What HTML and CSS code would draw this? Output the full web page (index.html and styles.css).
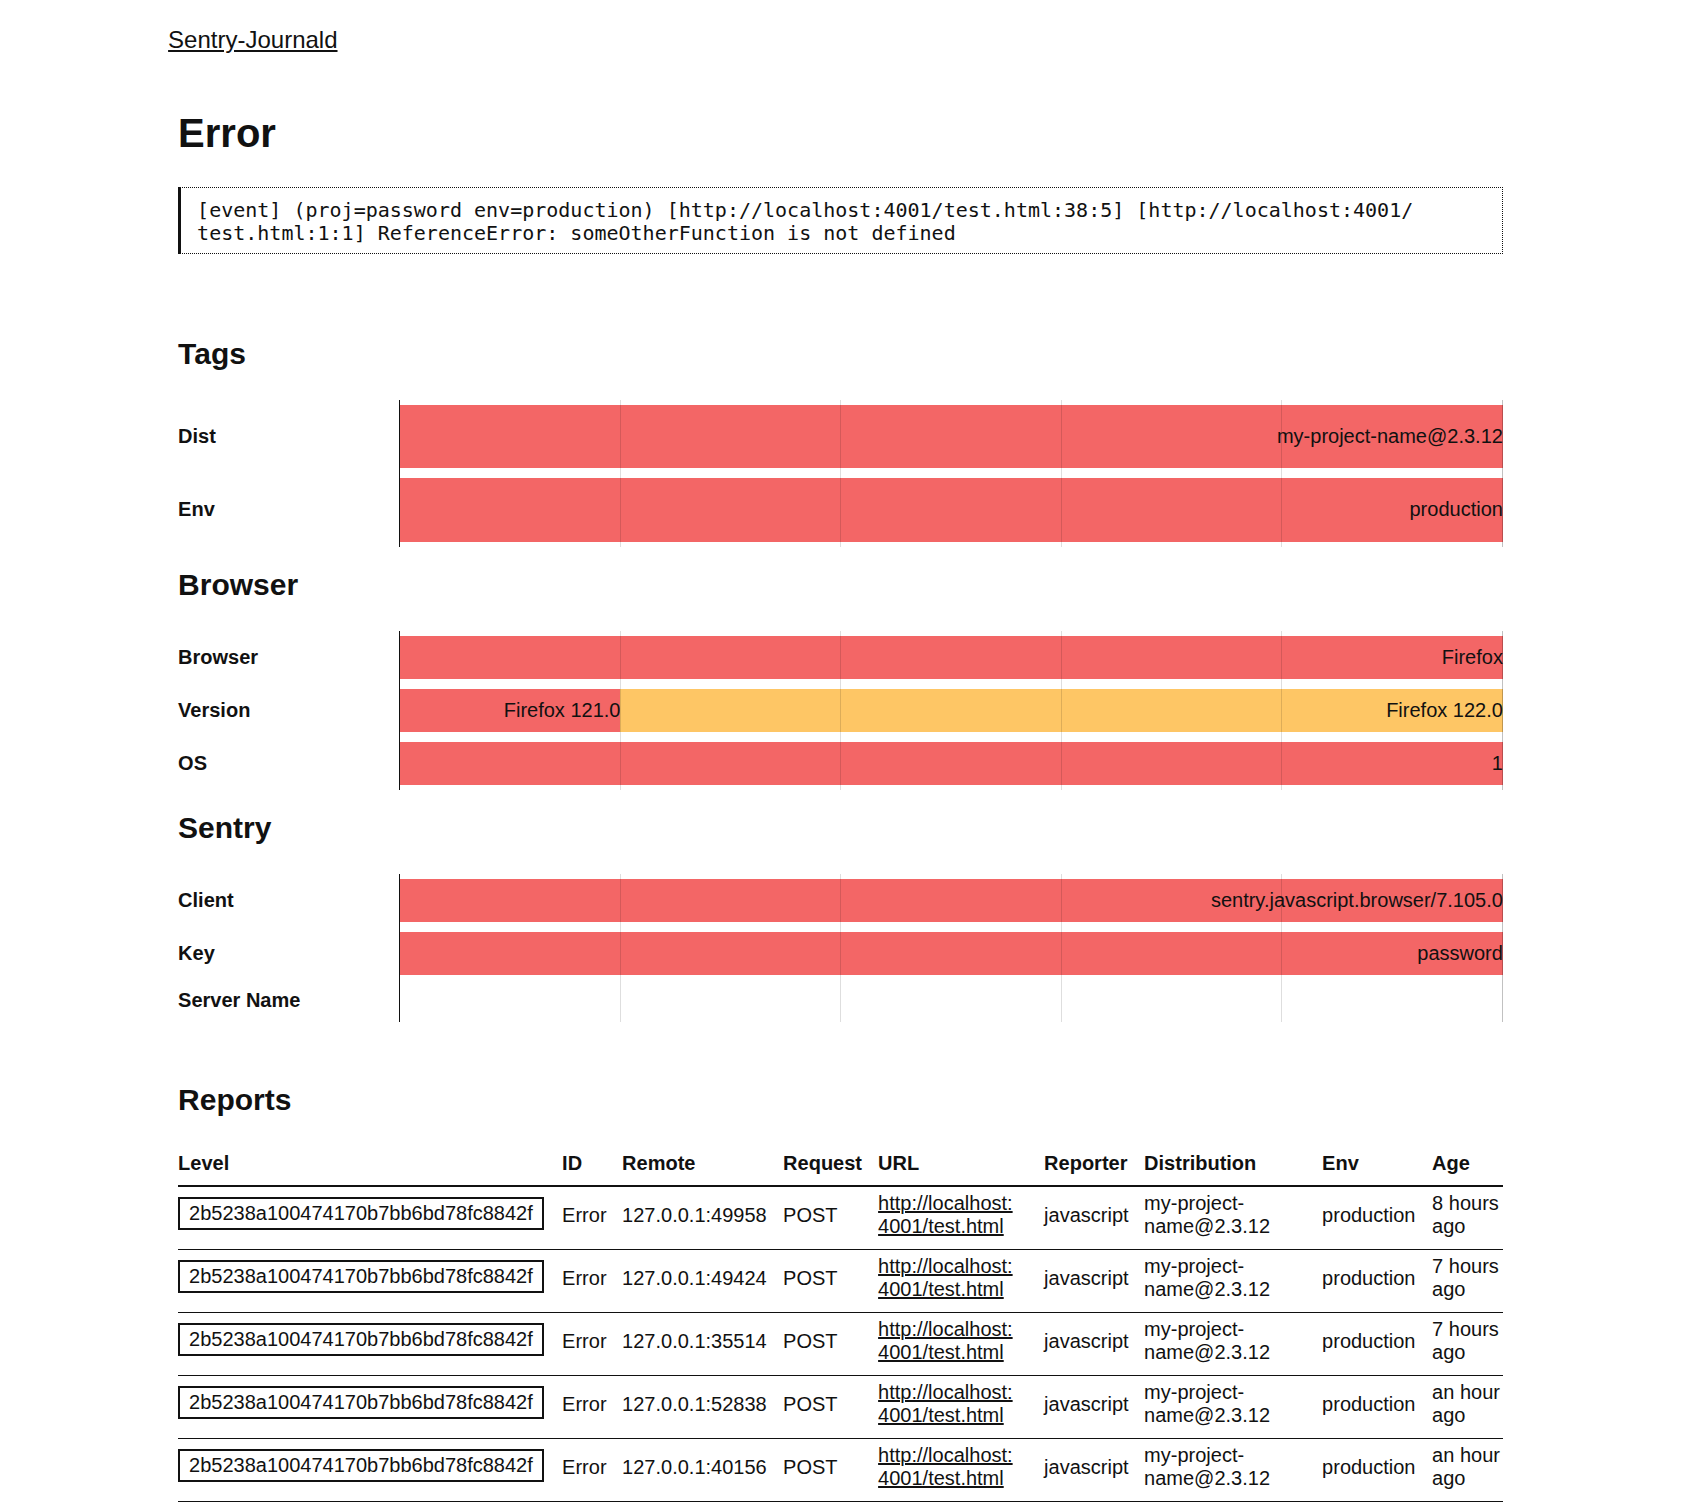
FILE: index.html
```html
<!DOCTYPE html>
<html lang="en">
<head>
<meta charset="utf-8">
<title>Sentry-Journald</title>
<link rel="stylesheet" href="styles.css">
</head>
<body>
<div class="page">
  <nav class="nav"><a href="#" class="brand">Sentry-Journald</a></nav>
  <main class="main">
    <h1 class="title">Error</h1>
    <pre class="message">[event] (proj=password env=production) [http://localhost:4001/test.html:38:5] [http://localhost:4001/<wbr>test.html:1:1] ReferenceError: someOtherFunction is not defined</pre>

    <h2 class="section-title first">Tags</h2>
    <div class="chart chart-tags">
      <div class="label">Dist</div>
      <div class="track"><div class="bar red" style="width:100%">my-project-name@2.3.12</div></div>
      <div class="label">Env</div>
      <div class="track"><div class="bar red" style="width:100%">production</div></div>
    </div>

    <h2 class="section-title">Browser</h2>
    <div class="chart chart-browser">
      <div class="label">Browser</div>
      <div class="track"><div class="bar red" style="width:100%">Firefox</div></div>
      <div class="label">Version</div>
      <div class="track"><div class="bar red" style="width:20%">Firefox 121.0</div><div class="bar orange" style="width:80%">Firefox 122.0</div></div>
      <div class="label">OS</div>
      <div class="track"><div class="bar red" style="width:100%">1</div></div>
    </div>

    <h2 class="section-title">Sentry</h2>
    <div class="chart chart-sentry">
      <div class="label">Client</div>
      <div class="track"><div class="bar red" style="width:100%">sentry.javascript.browser/7.105.0</div></div>
      <div class="label">Key</div>
      <div class="track"><div class="bar red" style="width:100%">password</div></div>
      <div class="label">Server Name</div>
      <div class="track"></div>
    </div>

    <h2 class="section-title reports-title">Reports</h2>
    <table class="reports">
      <colgroup>
        <col class="c-level"><col class="c-id"><col class="c-remote"><col class="c-request"><col class="c-url"><col class="c-reporter"><col class="c-dist"><col class="c-env"><col class="c-age">
      </colgroup>
      <thead>
        <tr><th>Level</th><th>ID</th><th>Remote</th><th>Request</th><th>URL</th><th>Reporter</th><th>Distribution</th><th>Env</th><th>Age</th></tr>
      </thead>
      <tbody>
        <tr><td><span class="hash">2b5238a100474170b7bb6bd78fc8842f</span></td><td>Error</td><td>127.0.0.1:49958</td><td>POST</td><td><a href="#" class="url">http://localhost:4001/test.html</a></td><td>javascript</td><td>my-project-name@2.3.12</td><td>production</td><td>8 hours ago</td></tr>
        <tr><td><span class="hash">2b5238a100474170b7bb6bd78fc8842f</span></td><td>Error</td><td>127.0.0.1:49424</td><td>POST</td><td><a href="#" class="url">http://localhost:4001/test.html</a></td><td>javascript</td><td>my-project-name@2.3.12</td><td>production</td><td>7 hours ago</td></tr>
        <tr><td><span class="hash">2b5238a100474170b7bb6bd78fc8842f</span></td><td>Error</td><td>127.0.0.1:35514</td><td>POST</td><td><a href="#" class="url">http://localhost:4001/test.html</a></td><td>javascript</td><td>my-project-name@2.3.12</td><td>production</td><td>7 hours ago</td></tr>
        <tr><td><span class="hash">2b5238a100474170b7bb6bd78fc8842f</span></td><td>Error</td><td>127.0.0.1:52838</td><td>POST</td><td><a href="#" class="url">http://localhost:4001/test.html</a></td><td>javascript</td><td>my-project-name@2.3.12</td><td>production</td><td>an hour ago</td></tr>
        <tr><td><span class="hash">2b5238a100474170b7bb6bd78fc8842f</span></td><td>Error</td><td>127.0.0.1:40156</td><td>POST</td><td><a href="#" class="url">http://localhost:4001/test.html</a></td><td>javascript</td><td>my-project-name@2.3.12</td><td>production</td><td>an hour ago</td></tr>
      </tbody>
    </table>
  </main>
</div>
</body>
</html>
```

FILE: styles.css
```css
html, body {
  margin: 0;
  padding: 0;
  background: #fff;
}
body {
  font-family: "Liberation Sans", Arial, sans-serif;
  font-size: 20px;
  line-height: 1.15;
  color: #111;
}
a {
  color: #111;
}
.page {
  width: 80%;
  margin: 0 auto;
}
.nav {
  padding-top: 26px;
  font-size: 24px;
  line-height: normal;
}
.brand {
  text-decoration: underline;
}
.main {
  padding: 0 10px;
}
.title {
  font-size: 40px;
  line-height: 1.15;
  font-weight: bold;
  margin: 55.6px 0 0;
}
.message {
  margin: 31px 0 0;
  font-family: "DejaVu Sans Mono", monospace;
  font-size: 20px;
  line-height: 23px;
  white-space: pre-wrap;
  border: 1px dotted #111;
  border-left: 3px solid #111;
  padding: 11.5px 16px 7.5px 16px;
}
.section-title {
  font-size: 30px;
  line-height: 36px;
  font-weight: bold;
  margin: 20px 0 28px;
}
.section-title.first {
  margin-top: 82px;
}
.section-title.reports-title {
  margin-top: 60.6px;
  margin-bottom: 0;
}

/* charts */
.chart {
  position: relative;
  display: grid;
  grid-template-columns: 1fr 5fr;
  row-gap: 10px;
  padding: 5px 0;
}
.chart::after {
  content: "";
  position: absolute;
  top: 0;
  bottom: 0;
  left: calc(100% / 6);
  right: 0;
  pointer-events: none;
  border-left: 1px solid #111;
  background-image:
    linear-gradient(to right, rgba(0, 0, 0, 0.13) 0 1px, transparent 1px),
    repeating-linear-gradient(to right, transparent 0 calc(20% - 1px), rgba(0, 0, 0, 0.13) calc(20% - 1px) 20%);
  background-size: 1px 100%, 100% 100%;
  background-position: right top, left top;
  background-repeat: no-repeat;
}
.chart-tags { grid-auto-rows: 63.5px; }
.chart-browser { grid-auto-rows: 43px; }
.chart-sentry { grid-template-rows: 43px 43px 32px; }

.label {
  font-weight: bold;
  display: flex;
  align-items: center;
}
.track {
  display: flex;
  padding-left: 1px;
}
.bar {
  display: flex;
  align-items: center;
  justify-content: flex-end;
  white-space: nowrap;
}
.bar.red { background: #f36666; }
.bar.orange { background: #fec665; }

/* table */
.reports {
  width: 100%;
  border-collapse: collapse;
  table-layout: fixed;
  margin-top: 23.5px;
}
.c-level { width: 376px; }
.c-id { width: 60px; }
.c-remote { width: 161px; }
.c-request { width: 95px; }
.c-url { width: 166px; }
.c-reporter { width: 100px; }
.c-dist { width: 178px; }
.c-env { width: 110px; }
.c-age { width: 79px; }

.reports th,
.reports td {
  text-align: left;
  padding: 5px 8px 11px;
  vertical-align: middle;
}
.reports th {
  padding-top: 10.4px;
  padding-bottom: 10.4px;
  border-bottom: 2px solid #111;
}
.reports td {
  border-bottom: 1px solid #111;
}
.reports th:first-child,
.reports td:first-child {
  padding-left: 0;
}
.reports th:last-child,
.reports td:last-child {
  padding-right: 0;
}
.hash {
  display: inline-block;
  border: 2px solid #111;
  padding: 3px 9px;
  margin-bottom: 4.4px;
}
.url {
  word-break: break-all;
}
.reports td:nth-child(5) {
  padding-right: 14px;
}
```
